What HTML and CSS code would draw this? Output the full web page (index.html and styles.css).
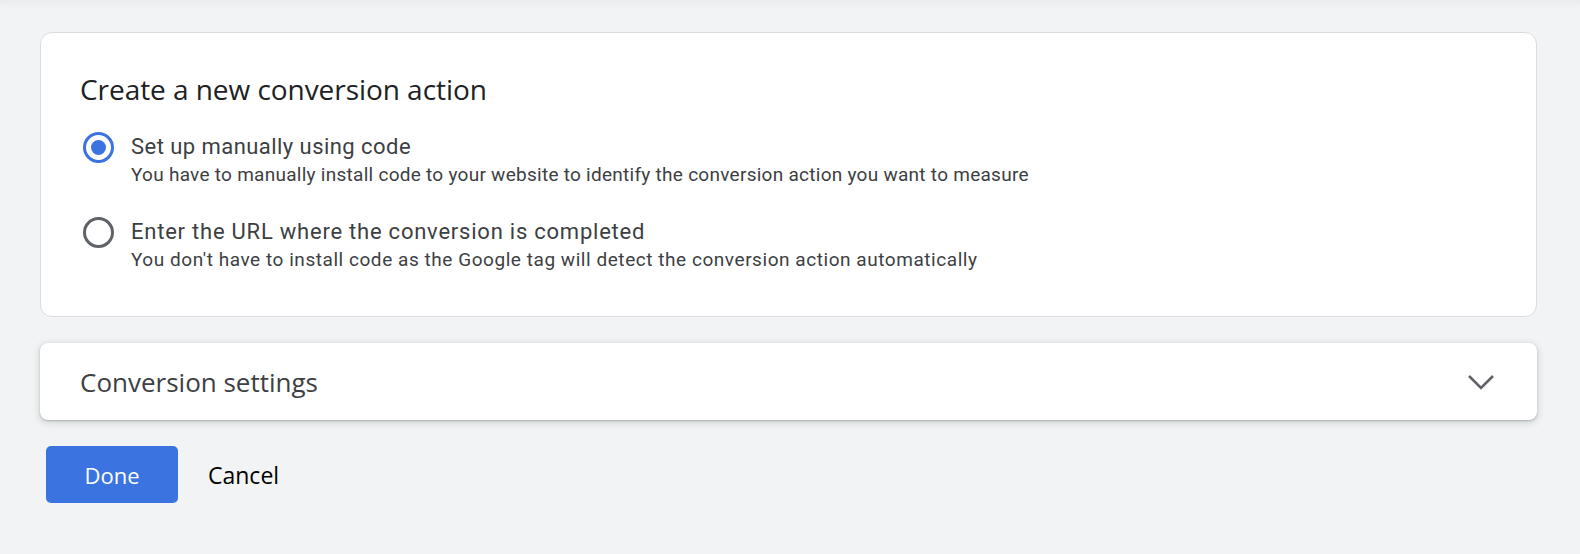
FILE: index.html
```html
<!DOCTYPE html>
<html>
<head>
<meta charset="utf-8">
<link rel="stylesheet" href="styles.css">
</head>
<body>
<div class="page">
  <section class="card create">
    <h2 class="title">Create a new conversion action</h2>
    <div class="options">
      <label class="option">
        <span class="radio checked"><span class="dot"></span></span>
        <span class="texts">
          <span class="label">Set up manually using code</span>
          <span class="desc">You have to manually install code to your website to identify the conversion action you want to measure</span>
        </span>
      </label>
      <label class="option option-wide">
        <span class="radio"></span>
        <span class="texts">
          <span class="label">Enter the URL where the conversion is completed</span>
          <span class="desc">You don't have to install code as the Google tag will detect the conversion action automatically</span>
        </span>
      </label>
    </div>
  </section>
  <section class="card settings">
    <h3 class="settings-title">Conversion settings</h3>
    <svg class="chevron" width="28" height="18" viewBox="0 0 28 18"><polyline points="2,3 14,15 26,3" fill="none" stroke="#5f6368" stroke-width="2.6"/></svg>
  </section>
  <div class="actions">
    <button class="btn primary">Done</button>
    <button class="btn text">Cancel</button>
  </div>
</div>
</body>
</html>
```
FILE: styles.css
```css
html, body {
  margin: 0;
  padding: 0;
}
body {
  background: #f1f3f4;
  font-family: Roboto, "Liberation Sans", Arial, sans-serif;
  width: 1580px;
  height: 554px;
  overflow: hidden;
  box-shadow: inset 0 8px 8px -6px rgba(60,64,67,0.06);
}
.page {
  padding: 32px 43px 0 40px;
  display: flex;
  flex-direction: column;
}
.card {
  background: #fff;
  box-sizing: border-box;
}
.create {
  border: 1px solid #dadce0;
  border-radius: 12px;
  height: 285px;
  padding: 38px 39px 0;
}
.title {
  margin: 0;
  font-family: "Open Sans", Roboto, sans-serif;
  font-weight: 400;
  font-size: 28px;
  line-height: 36px;
  color: #202124;
  letter-spacing: -0.05px;
}
.options {
  margin-top: 25px;
  display: flex;
  flex-direction: column;
  gap: 29px;
}
.option {
  display: flex;
  align-items: flex-start;
  gap: 17px;
  padding-left: 3px;
}
.radio {
  width: 31px;
  height: 31px;
  box-sizing: border-box;
  border-radius: 50%;
  border: 3px solid #5f6368;
  display: flex;
  align-items: center;
  justify-content: center;
  flex: none;
}
.radio.checked {
  border-color: #3b74e0;
}
.dot {
  width: 15px;
  height: 15px;
  border-radius: 50%;
  background: #3b74e0;
}
.texts {
  display: flex;
  flex-direction: column;
}
.label {
  font-size: 22px;
  line-height: 30px;
  color: #3c4043;
  letter-spacing: 0.45px;
}
.desc {
  font-size: 19px;
  line-height: 26px;
  color: #3c4043;
  letter-spacing: 0.27px;
}
.option-wide .label {
  letter-spacing: 0.77px;
}
.option-wide .desc {
  letter-spacing: 0.55px;
}
.settings {
  margin-top: 26px;
  height: 77px;
  border-radius: 8px;
  box-shadow: 0 1px 2px rgba(60,64,67,0.3), 0 2px 6px 2px rgba(60,64,67,0.12);
  display: flex;
  align-items: center;
  justify-content: space-between;
  padding: 0 42px 0 40px;
}
.settings-title {
  margin: 0;
  font-family: "Open Sans", Roboto, sans-serif;
  font-weight: 500;
  font-size: 26px;
  color: #3c4043;
}
.chevron {
  display: block;
}
.actions {
  margin-top: 26px;
  display: flex;
  align-items: center;
  gap: 30px;
  padding-left: 6px;
}
.btn {
  border: none;
  background: none;
  font-family: "Open Sans", Roboto, sans-serif;
  font-size: 22px;
  font-weight: 500;
  cursor: pointer;
  padding: 0;
}
.primary {
  width: 132px;
  height: 57px;
  background: #3b74e0;
  color: #fff;
  border-radius: 5px;
}
.text {
  color: #000;
  font-size: 23px;
}
```
